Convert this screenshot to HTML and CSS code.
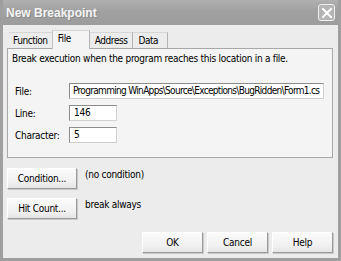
FILE: index.html
```html
<!DOCTYPE html>
<html lang="en">
<head>
    <meta charset="UTF-8">
    <title>New Breakpoint</title>
    <link rel="stylesheet" href="styles.css">
</head>
<body>
    <div class="window">
        <div class="titlebar">
            <span class="title">New Breakpoint</span>
            <span class="close">
                <svg width="12" height="12" viewBox="0 0 12 12">
                    <path d="M2 2 L10 10 M10 2 L2 10" stroke="#ffffff" stroke-width="2" stroke-linecap="square"/>
                </svg>
            </span>
        </div>

        <div class="client">
            <!-- schede -->
            <div class="tabs">
                <div class="tab">Function</div>
                <div class="tab active">File</div>
                <div class="tab t-address">Address</div>
                <div class="tab t-data">Data</div>
            </div>

            <div class="panel">
                <p class="desc">Break execution when the program reaches this location in a file.</p>
                <div class="field">
                    <label>File:</label>
                    <div class="input wide">Programming WinApps\Source\Exceptions\BugRidden\Form1.cs</div>
                </div>
                <div class="field">
                    <label>Line:</label>
                    <div class="input short">146</div>
                </div>
                <div class="field">
                    <label>Character:</label>
                    <div class="input short">5</div>
                </div>
            </div>

            <div class="option">
                <button class="btn side">Condition...</button>
                <span class="note">(no condition)</span>
            </div>
            <div class="option">
                <button class="btn side">Hit Count...</button>
                <span class="note">break always</span>
            </div>

            <div class="footer">
                <button class="btn">OK</button>
                <button class="btn">Cancel</button>
                <button class="btn">Help</button>
            </div>
        </div>
    </div>
</body>
</html>
```

FILE: styles.css
```css
body {
    margin: 0;
    padding: 0;
    font-family: "DejaVu Sans Condensed", "Liberation Sans", Arial, sans-serif;
    font-size: 10px;
    letter-spacing: -0.27px;
    color: #000000;
    background-color: #ffffff;
}
.window {
    width: 341px;
    height: 261px;
    box-sizing: border-box;
    background-color: #9f9f9f;
    padding: 0 3px 3px 3px;
    display: flex;
    flex-direction: column;
}
.titlebar {
    height: 25px;
    display: flex;
    align-items: center;
    justify-content: space-between;
    padding: 0 3px 0 3px;
    background: linear-gradient(#b0b0b0, #a2a2a2 40%, #9c9c9c);
}
.title {
    color: #f4f4f4;
    font-family: "Liberation Sans", Arial, sans-serif;
    font-weight: bold;
    font-size: 12px;
    letter-spacing: 0;
    text-shadow: 1px 1px 0 #8a8a8a;
}
.close {
    width: 15px;
    height: 15px;
    border: 1px solid #f0f0f0;
    border-radius: 3px;
    background-color: #b4b4b4;
    display: flex;
    align-items: center;
    justify-content: center;
}
.client {
    flex: 1;
    background-color: #ececec;
    padding: 4px 5px 0 4px;
}
.tabs {
    display: flex;
    height: 19px;
    padding-left: 2px;
    align-items: flex-end;
}
.tab {
    height: 15px;
    line-height: 15px;
    padding: 0 4px 0 4px;
    letter-spacing: -0.45px;
    border-top: 1px solid #d6d6d6;
    border-right: 1px solid #b4b4b4;
    background-color: #ececec;
}
.t-address {
    padding: 0 5px 0 5px;
}
.t-data {
    padding: 0 9px 0 5px;
}
.tab.active {
    height: 18px;
    line-height: 16px;
    padding: 0 18px 0 5px;
    background-color: #f4f4f4;
    border-left: 1px solid #c4c4c4;
    margin-bottom: -1px;
    margin-left: -1px;
    position: relative;
}
.panel {
    height: 110px;
    box-sizing: border-box;
    border: 1px solid #a8a8a8;
    background-color: #f4f4f4;
    padding: 4px 8px 0 4px;
}
.desc {
    margin: 0 0 19px 0;
    white-space: nowrap;
}
.field {
    display: flex;
    align-items: center;
    margin-bottom: 6px;
}
.field label {
    width: 54px;
    padding-left: 3px;
}
.input {
    height: 16px;
    box-sizing: border-box;
    line-height: 13px;
    padding: 0 4px;
    white-space: nowrap;
    overflow: hidden;
    background-color: #ffffff;
    border: 1px solid #d0d0d0;
    border-top-color: #8c8c8c;
    border-left-color: #8c8c8c;
}
.input.wide {
    width: 255px;
    padding-left: 3px;
    letter-spacing: -0.68px;
}
.input.short {
    width: 48px;
}
.option {
    display: flex;
    align-items: flex-start;
    margin-top: 10px;
}
.option + .option {
    margin-top: 9px;
}
.btn {
    font-family: "DejaVu Sans Condensed", "Liberation Sans", Arial, sans-serif;
    font-size: 10px;
    letter-spacing: -0.27px;
    color: #000000;
    height: 21px;
    padding: 0;
    background: linear-gradient(#fbfbfb, #f0f0f0 70%, #e4e4e4);
    border: 1px solid #ffffff;
    border-right-color: #9c9c9c;
    border-bottom-color: #9c9c9c;
    box-shadow: 1px 1px 0 #c8c8c8;
}
.btn.side {
    width: 70px;
}
.note {
    margin-left: 8px;
    margin-top: 1px;
}
.footer {
    display: flex;
    justify-content: flex-end;
    gap: 4px;
    margin-top: 13px;
}
.footer .btn {
    width: 61px;
}
```
